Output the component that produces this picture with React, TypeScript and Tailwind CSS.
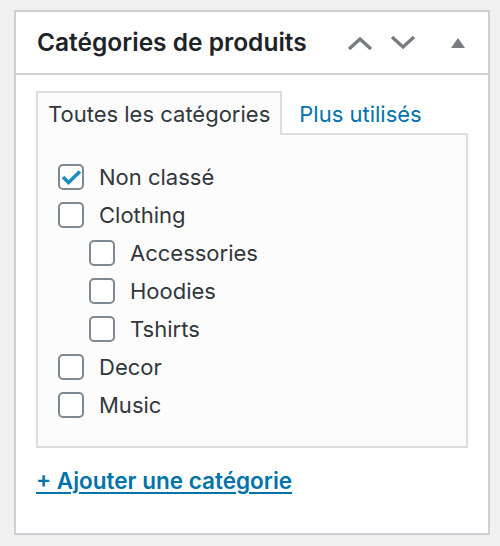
import React from 'react';

const categories = [
  { name: 'Non classé', checked: true, child: false },
  { name: 'Clothing', checked: false, child: false },
  { name: 'Accessories', checked: false, child: true },
  { name: 'Hoodies', checked: false, child: true },
  { name: 'Tshirts', checked: false, child: true },
  { name: 'Decor', checked: false, child: false },
  { name: 'Music', checked: false, child: false },
];

const Checkbox = ({ checked }: { checked: boolean }) => (
  <span className="relative w-[26px] h-[26px] shrink-0 rounded-[5px] border-2 border-[#7e8993] bg-white">
    {checked && (
      <svg className="absolute -left-[2px] -top-[2px]" width="26" height="26" viewBox="0 0 26 26">
        <polyline points="5,13 10.5,18.5 22,7.5" fill="none" stroke="#1e8cbe" strokeWidth="3.6" strokeLinejoin="miter" />
      </svg>
    )}
  </span>
);

const App = () => {
  return (
    <div className="min-h-screen bg-[#f0f0f1] pt-[10px] pl-[14px] font-['Inter',sans-serif]">
      <div className="w-[476px] h-[525px] border-2 border-[#ccd0d4] bg-white">
        <div className="flex items-center h-[63px] border-b-2 border-[#ccd0d4] pl-[21px] pr-[10px]">
          <h2 className="text-[24.5px] font-semibold text-[#1d2327]">Catégories de produits</h2>
          <div className="ml-auto flex items-center">
            <button className="w-[43px] h-[40px] flex items-center justify-center">
              <svg width="26" height="16" viewBox="0 0 26 16">
                <polyline points="2,14 13,4 24,14" fill="none" stroke="#787c82" strokeWidth="3.4" />
              </svg>
            </button>
            <button className="w-[43px] h-[40px] flex items-center justify-center">
              <svg width="26" height="16" viewBox="0 0 26 16">
                <polyline points="2,2 13,12 24,2" fill="none" stroke="#787c82" strokeWidth="3.4" />
              </svg>
            </button>
            <button className="ml-[14px] w-[40px] h-[40px] flex items-center justify-center">
              <svg width="14" height="10" viewBox="0 0 14 10">
                <polygon points="7,0 14,10 0,10" fill="#787c82" />
              </svg>
            </button>
          </div>
        </div>

        <div className="px-[20px] pt-[16px]">
          <div className="flex items-end">
            <div className="relative z-10 -mb-[2px] h-[44px] px-[10px] flex items-center border-2 border-b-0 border-[#dcdcde] bg-[#fcfcfc] text-[22px] text-[#32373c]">
              Toutes les catégories
            </div>
            <a className="pl-[17px] h-[42px] pt-[4px] flex items-center text-[22px] text-[#0073aa]">Plus utilisés</a>
          </div>
          <div className="border-2 border-[#dcdcde] bg-[#fcfcfc] pt-[29px] pb-[28px] pl-[20px] flex flex-col gap-[12px]">
            {categories.map((c, i) => (
              <label key={i} className={`flex items-center gap-[15px] h-[26px] text-[22px] text-[#32373c] ${c.child ? 'pl-[31px]' : ''}`}>
                <Checkbox checked={c.checked} />
                <span>{c.name}</span>
              </label>
            ))}
          </div>
          <div className="pt-[18px] leading-[30px]">
            <a className="text-[22.5px] font-semibold text-[#0073aa] underline underline-offset-[3px] decoration-[1.5px]">
              + Ajouter une catégorie
            </a>
          </div>
        </div>
      </div>
    </div>
  );
};

export default App;
